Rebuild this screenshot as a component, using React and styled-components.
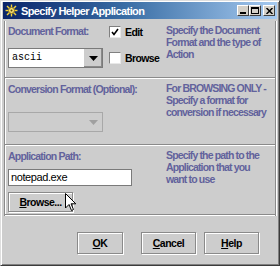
import React from 'react';
import styled, { createGlobalStyle } from 'styled-components';

const GlobalStyle = createGlobalStyle`
  html, body { margin: 0; padding: 0; background: #ffffff; }
  body { font-family: "Liberation Sans", Arial, sans-serif; }
`;

const Window = styled.div`
  position: relative;
  width: 280px;
  height: 266px;
  box-sizing: border-box;
  background: #cdcdcd;
  border: 1px solid;
  border-color: #dedede #3c3c3c #3c3c3c #dedede;
  box-shadow: inset 1px 1px 0 #ffffff, inset -1px -1px 0 #808080;
  padding: 1px 2px 2px 2px;
  display: flex;
  flex-direction: column;
`;

const TitleBar = styled.div`
  height: 17px;
  display: flex;
  align-items: center;
  padding: 0 2px 0 2px;
  background: linear-gradient(to right, #0a246a 0%, #3a6ea5 45%, #a6caf0 100%);
`;

const Title = styled.span`
  flex: 1;
  margin-left: 3px;
  color: #ffffff;
  font-weight: bold;
  font-size: 11px;
  letter-spacing: -0.6px;
  white-space: nowrap;
`;

const Controls = styled.div`
  display: flex;
`;

const CtlButton = styled.div`
  width: 12px;
  height: 11px;
  margin-left: ${p => (p.$gap ? '2px' : '0')};
  box-sizing: border-box;
  background: #d4d0c8;
  border: 1px solid;
  border-color: #ffffff #404040 #404040 #ffffff;
  display: flex;
  align-items: center;
  justify-content: center;
  svg { display: block; }
`;

const Panels = styled.div`
  margin: 2px 1px 0 1px;
  border-left: 1px solid #8a8a8a;
  border-right: 1px solid #8a8a8a;
  box-shadow: inset 1px 0 0 #ffffff, 1px 0 0 #ffffff;
`;

const Section = styled.div`
  height: ${p => p.$h}px;
  box-sizing: border-box;
  display: flex;
  border-bottom: 1px solid #8a8a8a;
  box-shadow: 0 1px 0 #ffffff;
  margin-bottom: 1px;
  padding-left: 3px;
`;

const Left = styled.div`
  width: 158px;
  display: flex;
  flex-direction: column;
  padding-top: ${p => p.$pt}px;
`;

const Help = styled.div`
  padding-top: ${p => p.$pt}px;
  color: #62629c;
  font-weight: bold;
  font-size: 10.5px;
  line-height: 12px;
  letter-spacing: -0.85px;
  white-space: nowrap;
`;

const Label = styled.div`
  color: #62629c;
  font-weight: bold;
  font-size: 10.5px;
  line-height: 12px;
  letter-spacing: -0.8px;
  white-space: nowrap;
`;

const FormatGrid = styled.div`
  display: grid;
  grid-template-columns: 101px auto;
  grid-template-rows: 14px 20px;
  row-gap: 9px;
  align-items: start;
`;

const Check = styled.label`
  display: flex;
  align-items: center;
  gap: 4px;
  margin-top: ${p => p.$mt || 0}px;
  font-weight: bold;
  font-size: 10.5px;
  letter-spacing: -0.6px;
  color: #000000;
`;

const Box = styled.span`
  width: 12px;
  height: 12px;
  box-sizing: border-box;
  background: #ffffff;
  border: 1px solid;
  border-color: #808080 #e8e8e8 #e8e8e8 #808080;
  display: flex;
  align-items: center;
  justify-content: center;
`;

const Combo = styled.div`
  width: 95px;
  height: 20px;
  box-sizing: border-box;
  margin-top: ${p => p.$mt || 0}px;
  display: flex;
  border: 1px solid ${p => (p.$disabled ? '#a8a8a8' : '#7a7a7a')};
  background: ${p => (p.$disabled ? '#cdcdcd' : '#ffffff')};
`;

const ComboText = styled.div`
  flex: 1;
  padding-left: 3px;
  font-family: "Liberation Mono", "Courier New", monospace;
  font-size: 10px;
  line-height: 18px;
  color: #000000;
`;

const ComboArrow = styled.div`
  width: 18px;
  display: flex;
  align-items: center;
  justify-content: center;
  background: #cdcdcd;
  border-left: ${p => (p.$disabled ? 'none' : '1px solid #ffffff')};
  box-shadow: ${p => (p.$disabled ? 'none' : 'inset -1px -1px 0 #8a8a8a')};
`;

const TextField = styled.div`
  width: 124px;
  height: 17px;
  box-sizing: border-box;
  margin-top: 7px;
  border: 1px solid #7a7a7a;
  background: #ffffff;
  padding-left: 2px;
  font-size: 11px;
  line-height: 15px;
  letter-spacing: -0.4px;
  color: #000000;
`;

const Button = styled.div`
  width: ${p => p.$w}px;
  height: ${p => p.$h || 22}px;
  margin-left: ${p => p.$ml || 0}px;
  margin-top: ${p => p.$mt || 0}px;
  box-sizing: border-box;
  border: 1px solid #8a8a8a;
  box-shadow: inset 1px 1px 0 #ffffff, 1px 1px 0 #ffffff;
  display: flex;
  align-items: center;
  justify-content: center;
  font-weight: bold;
  font-size: 10.5px;
  letter-spacing: -0.5px;
  color: #000000;
  u { text-decoration-thickness: 1px; text-underline-offset: 1px; }
`;

const ButtonRow = styled.div`
  display: flex;
  margin-top: 16px;
`;

const Pointer = styled.svg`
  position: absolute;
  left: 64px;
  top: 192px;
`;

const Arrow = ({ disabled }) => (
  <svg width="9" height="5" viewBox="0 0 9 5">
    <polygon points="0,0 9,0 4.5,5" fill={disabled ? '#a0a0a0' : '#000000'} />
  </svg>
);

const Tick = () => (
  <svg width="8" height="8" viewBox="0 0 8 8">
    <path d="M1 4 L3 6.5 L7 1" stroke="#000" strokeWidth="1.6" fill="none" />
  </svg>
);

export default function App() {
  return (
    <>
      <GlobalStyle />
      <Window>
        <TitleBar>
          <svg width="13" height="13" viewBox="0 0 13 13">
            <g stroke="#f4d43c" strokeWidth="1.4">
              <line x1="6.5" y1="0.5" x2="6.5" y2="12.5" />
              <line x1="0.5" y1="6.5" x2="12.5" y2="6.5" />
              <line x1="2" y1="2" x2="11" y2="11" />
              <line x1="11" y1="2" x2="2" y2="11" />
            </g>
            <circle cx="6.5" cy="6.5" r="3" fill="#f8e070" stroke="#8a6a10" strokeWidth="0.8" />
            <circle cx="6.5" cy="6.5" r="1" fill="#5a4a10" />
          </svg>
          <Title>Specify Helper Application</Title>
          <Controls>
            <CtlButton>
              <svg width="6" height="6" viewBox="0 0 6 6"><rect x="0" y="4" width="6" height="2" fill="#000" /></svg>
            </CtlButton>
            <CtlButton>
              <svg width="8" height="7" viewBox="0 0 8 7"><rect x="0.5" y="0.5" width="7" height="6" fill="none" stroke="#000" /><rect x="0" y="0" width="8" height="2" fill="#000" /></svg>
            </CtlButton>
            <CtlButton $gap>
              <svg width="7" height="6" viewBox="0 0 7 6"><path d="M0.5 0 L6.5 6 M6.5 0 L0.5 6" stroke="#000" strokeWidth="1.5" /></svg>
            </CtlButton>
          </Controls>
        </TitleBar>

        <Panels>
          <Section $h={57}>
            <Left $pt={4}>
              <FormatGrid>
                <Label>Document Format:</Label>
                <Check $mt={1}><Box><Tick /></Box>Edit</Check>
                <Combo>
                  <ComboText>ascii</ComboText>
                  <ComboArrow><Arrow /></ComboArrow>
                </Combo>
                <Check $mt={4}><Box />Browse</Check>
              </FormatGrid>
            </Left>
            <Help $pt={3}>
              Specify the Document<br />
              Format and the type of<br />
              Action
            </Help>
          </Section>

          <Section $h={66}>
            <Left $pt={4}>
              <Label>Conversion Format (Optional):</Label>
              <Combo $disabled $mt={17}>
                <ComboText />
                <ComboArrow $disabled><Arrow disabled /></ComboArrow>
              </Combo>
            </Left>
            <Help $pt={3}>
              For BROWSING ONLY -<br />
              Specify a format for<br />
              conversion if necessary
            </Help>
          </Section>

          <Section $h={69}>
            <Left $pt={4}>
              <Label>Application Path:</Label>
              <TextField>notepad.exe</TextField>
              <Button $w={65} $h={20} $mt={6}><span><u>B</u>rowse...</span></Button>
            </Left>
            <Help $pt={3}>
              Specify the path to the<br />
              Application that you<br />
              want to use
            </Help>
          </Section>
        </Panels>

        <ButtonRow>
          <Button $w={46} $ml={74}><span><u>O</u>K</span></Button>
          <Button $w={55} $ml={18}><span><u>C</u>ancel</span></Button>
          <Button $w={55} $ml={8}><span><u>H</u>elp</span></Button>
        </ButtonRow>

        <Pointer width="12" height="19" viewBox="0 0 12 19">
          <path d="M0.5 0.5 L0.5 15 L4 11.5 L6.5 17.5 L8.5 16.5 L6 10.8 L10.8 10.8 Z" fill="#ffffff" stroke="#000000" strokeWidth="1" strokeLinejoin="miter" />
        </Pointer>
      </Window>
    </>
  );
}
